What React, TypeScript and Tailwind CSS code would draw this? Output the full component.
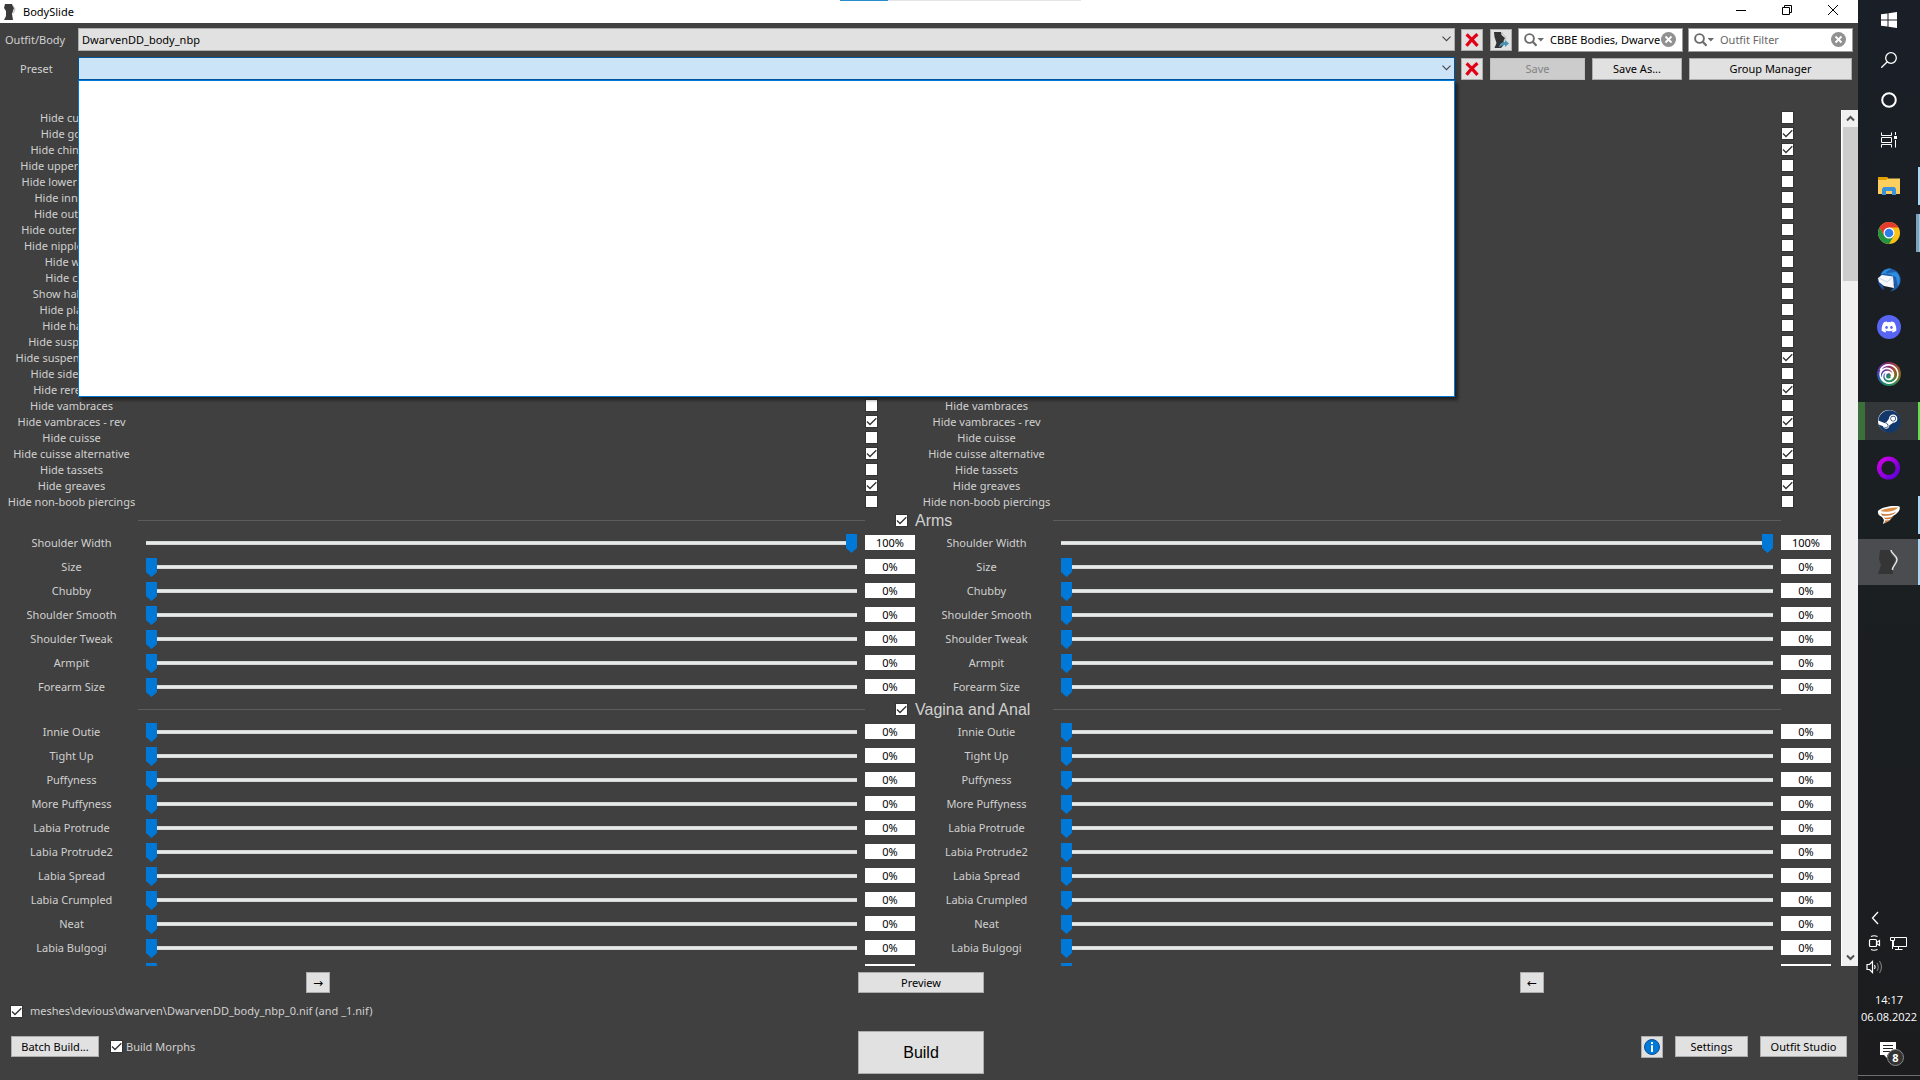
import React, { useState } from "react";
import { FaDiscord, FaSteam } from "react-icons/fa";
import { SiUbisoft } from "react-icons/si";

const toggles: [string, boolean][] = [
  ["Hide cuirass", false],
  ["Hide gorget", true],
  ["Hide chin guard", true],
  ["Hide upper plackart", false],
  ["Hide lower plackart", false],
  ["Hide inner bra", false],
  ["Hide outer bra", false],
  ["Hide outer bra - rev", false],
  ["Hide nipple covers", false],
  ["Hide waist", false],
  ["Hide cloth", false],
  ["Show half cups", false],
  ["Hide placket", false],
  ["Hide hands", false],
  ["Hide suspenders", false],
  ["Hide suspenders - rev", true],
  ["Hide side plates", false],
  ["Hide rerebrace", true],
  ["Hide vambraces", false],
  ["Hide vambraces - rev", true],
  ["Hide cuisse", false],
  ["Hide cuisse alternative", true],
  ["Hide tassets", false],
  ["Hide greaves", true],
  ["Hide non-boob piercings", false],
];

const groups: { title: string; sliders: [string, number][] }[] = [
  {
    title: "Arms",
    sliders: [
      ["Shoulder Width", 100],
      ["Size", 0],
      ["Chubby", 0],
      ["Shoulder Smooth", 0],
      ["Shoulder Tweak", 0],
      ["Armpit", 0],
      ["Forearm Size", 0],
    ],
  },
  {
    title: "Vagina and Anal",
    sliders: [
      ["Innie Outie", 0],
      ["Tight Up", 0],
      ["Puffyness", 0],
      ["More Puffyness", 0],
      ["Labia Protrude", 0],
      ["Labia Protrude2", 0],
      ["Labia Spread", 0],
      ["Labia Crumpled", 0],
      ["Neat", 0],
      ["Labia Bulgogi", 0],
      ["", 0],
    ],
  },
];

function Check({ id, label, initial }: { id: string; label?: string; initial: boolean }) {
  const [on, setOn] = useState(initial);
  return (
    <span className="relative block size-[13px] shrink-0">
      <input
        id={id}
        type="checkbox"
        aria-label={label}
        checked={on}
        onChange={() => setOn(!on)}
        className="block size-[13px] appearance-none border border-[#333333] bg-white"
      />
      {on && (
        <svg viewBox="0 0 13 13" className="pointer-events-none absolute inset-0 size-[13px]" fill="none" stroke="#333" strokeWidth="1.3">
          <path d="M2 6.5 5 9.5 11.3 3.2" />
        </svg>
      )}
    </span>
  );
}

function ToggleRow({ side, name, on }: { side: string; name: string; on: boolean }) {
  const id = `${side}-${name}`;
  return (
    <div className="flex h-4 items-start">
      <label htmlFor={id} className="w-[143px] shrink-0 text-center whitespace-nowrap">
        {name}
      </label>
      <div className="flex-1" />
      <div className="w-[50px] pt-px">
        <Check id={id} initial={on} />
      </div>
    </div>
  );
}

function SliderRow({ side, name, start }: { side: string; name: string; start: number }) {
  const [value, setValue] = useState(start);
  const id = `${side}-slider-${name}`;
  return (
    <div className="flex h-6 items-center">
      <label htmlFor={id} className="w-[143px] shrink-0 text-center whitespace-nowrap">
        {name}
      </label>
      <input
        id={id}
        type="range"
        min={0}
        max={100}
        value={value}
        onChange={(e) => setValue(Number(e.target.value))}
        className="mr-2 ml-[3px] h-5 min-w-0 flex-1 appearance-none bg-transparent [&::-webkit-slider-runnable-track]:h-1 [&::-webkit-slider-runnable-track]:border-y [&::-webkit-slider-runnable-track]:border-[#d6d6d6] [&::-webkit-slider-runnable-track]:bg-[#e7eaea] [&::-webkit-slider-thumb]:-mt-2 [&::-webkit-slider-thumb]:h-[19px] [&::-webkit-slider-thumb]:w-[11px] [&::-webkit-slider-thumb]:appearance-none [&::-webkit-slider-thumb]:bg-[#0078d7] [&::-webkit-slider-thumb]:[clip-path:polygon(0_0,100%_0,100%_74%,50%_100%,0_74%)]"
      />
      <input
        type="text"
        aria-label={`${name} value`}
        value={`${value}%`}
        onChange={(e) => setValue(parseInt(e.target.value) || 0)}
        className="mt-1 h-[15px] w-[50px] self-start bg-white text-center leading-[15px] text-black"
      />
    </div>
  );
}

function GroupHeader({ title }: { title: string }) {
  return (
    <div className="grid h-[21px] grid-cols-[915fr_916fr] items-center">
      <div className="flex items-center">
        <div className="ml-[138px] h-px flex-1 bg-[#5c5c5c]" />
        <div className="flex w-[50px] justify-end pr-[7px]">
          <Check id={`group-${title}`} initial={true} />
        </div>
      </div>
      <div className="flex items-center">
        <label htmlFor={`group-${title}`} className="w-[138px] font-['Liberation_Sans',sans-serif] text-base leading-5 whitespace-nowrap">
          {title}
        </label>
        <div className="h-px flex-1 bg-[#5c5c5c]" />
        <div className="w-[50px]" />
      </div>
    </div>
  );
}

const btn = "border border-[#adadad] bg-[#e1e1e1] text-black flex items-center justify-center whitespace-nowrap";

function RedX() {
  return (
    <svg viewBox="0 0 14 14" className="size-[14px]" stroke="#e10016" strokeWidth="3.2" fill="none">
      <path d="M1.5 1.5C5 4 9 9 12.5 12.8M12.5 1.2C9 4 4.500 9 1.500 12.800" />
    </svg>
  );
}

function Down() {
  return (
    <svg viewBox="0 0 9 6" className="h-[6px] w-[9px]" fill="none" stroke="#444" strokeWidth="1.1">
      <path d="M.5.7 4.500 4.700 8.500.7" />
    </svg>
  );
}

function SearchBox({ label, initial, placeholder }: { label: string; initial: string; placeholder?: string }) {
  const [text, setText] = useState(initial);
  return (
    <div className="flex h-6 w-[165px] items-center border border-[#9a9a9a] bg-white pr-[6px] pb-px pl-[5px]">
      <svg viewBox="0 0 20 14" className="h-[14px] w-5 shrink-0" fill="none" stroke="#6b6b6b">
        <circle cx="5.500" cy="5.500" r="4.400" strokeWidth="1.900" />
        <path d="M8.800 8.800 12.500 12.800" strokeWidth="2.200" />
        <path d="M13.500 5h6.500l-3.200 3.500z" fill="#6b6b6b" stroke="none" />
      </svg>
      <input
        type="text"
        aria-label={label}
        value={text}
        placeholder={placeholder}
        onChange={(e) => setText(e.target.value)}
        className="ml-[6px] min-w-0 flex-1 bg-transparent text-black placeholder:text-[#666]"
      />
      <button aria-label="Clear" onClick={() => setText("")} className="ml-px shrink-0">
        <svg viewBox="0 0 15 15" className="size-[15px]">
          <circle cx="7.500" cy="7.500" r="7.500" fill="#919191" />
          <path d="m4.500 4.500 6 6m0-6-6 6" stroke="#fff" strokeWidth="1.800" />
        </svg>
      </button>
    </div>
  );
}

function Toolbar() {
  return (
    <div className="flex flex-col gap-[5px] pt-[5px]">
      <div className="flex h-6 items-center">
        <label htmlFor="outfit" className="w-[78px] shrink-0 pl-[5px]">
          Outfit/Body
        </label>
        <div className="relative h-[23px] min-w-0 flex-1 self-start">
          <select id="outfit" className="block h-[23px] w-full appearance-none border border-[#adadad] bg-[#e1e1e1] pl-[3px] text-black">
            <option>DwarvenDD_body_nbp</option>
          </select>
          <span className="pointer-events-none absolute top-2 right-1">
            <Down />
          </span>
        </div>
        <button aria-label="Delete outfit" className={`${btn} ml-[6px] size-[22px]`}>
          <RedX />
        </button>
        <button aria-label="Edit in Outfit Studio" className={`${btn} mr-[6px] ml-[7px] size-[22px]`}>
          <svg viewBox="0 0 16 17" className="h-[17px] w-4">
            <path d="M1 0H8L8.500 3 12 6 10.500 9 11.500 12 8 16H1.500L3.500 11 1.500 5z" fill="#333" />
            <path d="M9 0c0 3 4 4 4 6s-1.500 2-2 3" fill="none" stroke="#bdbdbd" strokeWidth="1" />
            <path d="M6 15.500c.5-4 3-5.500 6-5.500V8l4 3.500-4 3.500v-2c-3 0-4 1-6 2.500z" fill="#4b93b5" />
          </svg>
        </button>
        <SearchBox label="Group filter" initial="CBBE Bodies, Dwarven" />
        <div className="mr-[5px] ml-[5px]">
          <SearchBox label="Outfit filter" initial="" placeholder="Outfit Filter" />
        </div>
      </div>
      <div className="flex h-6 items-center">
        <label htmlFor="preset" className="w-[78px] shrink-0 pl-5">
          Preset
        </label>
        <div className="relative h-[23px] min-w-0 flex-1 self-start">
          <select id="preset" className="block h-[23px] w-full appearance-none border border-[#005499] bg-[#cce4f7] text-black" />
          <span className="pointer-events-none absolute top-2 right-1">
            <Down />
          </span>
          <div role="listbox" aria-label="Presets" className="absolute inset-x-0 top-[23px] z-10 h-[317px] border border-[#0078d7] bg-white shadow-[3px_3px_3px_rgba(0,0,0,0.5)]" />
        </div>
        <button aria-label="Delete preset" className={`${btn} ml-[6px] size-[22px]`}>
          <RedX />
        </button>
        <button disabled className="ml-[7px] flex h-[22px] w-[95px] items-center justify-center border border-[#bfbfbf] bg-[#cccccc] text-[#838383]">
          Save
        </button>
        <button className={`${btn} ml-[7px] h-[22px] w-[90px]`}>Save As...</button>
        <button className={`${btn} mr-[6px] ml-[7px] h-[22px] w-[163px]`}>Group Manager</button>
      </div>
    </div>
  );
}

function ScrollBar() {
  return (
    <div className="flex w-[17px] shrink-0 flex-col items-center border-l border-white bg-[#f0f0f0]">
      <button aria-label="Scroll up" className="flex h-[17px] items-center justify-center">
        <svg viewBox="0 0 9 7" className="h-[7px] w-[9px]" fill="none" stroke="#505050" strokeWidth="2">
          <path d="M1 5.500 4.500 2 8 5.500" />
        </svg>
      </button>
      <div className="h-[154px] w-[15px] bg-[#cdcdcd]" />
      <div className="flex-1" />
      <button aria-label="Scroll down" className="flex h-[17px] items-center justify-center">
        <svg viewBox="0 0 9 7" className="h-[7px] w-[9px]" fill="none" stroke="#505050" strokeWidth="2">
          <path d="M1 1.500 4.500 5 8 1.500" />
        </svg>
      </button>
    </div>
  );
}

function Footer() {
  return (
    <div className="shrink-0">
      <div className="grid grid-cols-[636fr_570fr_652fr] justify-items-center pt-[6px]">
        <button aria-label="Copy to high weight" className={`${btn} h-[21px] w-6 font-['DejaVu_Sans',sans-serif] text-xs`}>→</button>
        <button className={`${btn} h-[21px] w-[126px]`}>Preview</button>
        <button aria-label="Copy to low weight" className={`${btn} h-[21px] w-6 font-['DejaVu_Sans',sans-serif] text-xs`}>←</button>
      </div>
      <div className="mt-[10px] flex h-[18px] items-start pl-[10px]">
        <div className="pt-[2px]">
          <Check id="output" initial={true} />
        </div>
        <label htmlFor="output" className="pl-[7px]">
          meshes\devious\dwarven\DwarvenDD_body_nbp_0.nif (and _1.nif)
        </label>
      </div>
      <div className="mt-[10px] grid h-[49px] grid-cols-[636fr_570fr_652fr] justify-items-center">
        <div className="mt-[5px] flex h-[21px] items-center justify-self-start pl-[11px]">
          <button className={`${btn} h-[21px] w-[88px]`}>Batch Build...</button>
          <div className="ml-[11px] flex items-center gap-[3px]">
            <Check id="morphs" initial={true} />
            <label htmlFor="morphs">Build Morphs</label>
          </div>
        </div>
        <button className={`${btn} h-[43px] w-[126px] font-['Liberation_Sans',sans-serif] text-base`}>Build</button>
        <div className="mt-[5px] mr-[11px] flex gap-3 justify-self-end">
          <button aria-label="About" className={`${btn} size-[22px]`}>
            <svg viewBox="0 0 16 16" className="size-4">
              <circle cx="8" cy="8" r="7.500" fill="#0078d7" stroke="#0a4f96" />
              <path d="M7 3h2v2H7zM7 6.300h2V13H7z" fill="#fff" />
            </svg>
          </button>
          <button className={`${btn} h-[21px] w-[73px]`}>Settings</button>
          <button className={`${btn} h-[21px] w-[87px]`}>Outfit Studio</button>
        </div>
      </div>
    </div>
  );
}

function TaskSlot({ label, className = "", bar, children }: { label: string; className?: string; bar?: string; children: React.ReactNode }) {
  return (
    <button aria-label={label} className={`relative flex h-[38px] w-full shrink-0 items-center justify-center ${className}`}>
      {children}
      {bar && <span className={`absolute inset-y-0 right-0 ${bar}`} />}
    </button>
  );
}

function TaskBar() {
  const slim = "flex h-10 w-full shrink-0 items-center justify-center";
  return (
    <nav className="flex w-[62px] shrink-0 flex-col bg-linear-to-b from-[#1a1e26] via-[#1a1f22] via-50% to-[#1c1c1e] text-white">
      <button aria-label="Start" className={slim}>
        <svg viewBox="0 0 16 16" className="size-4" fill="#fff">
          <path d="M0 2.300 6.500 1.400V7.500H0zM7.500 1.200 16 0v7.500H7.500zM0 8.500h6.500v6.100L0 13.700zM7.500 8.500H16V16l-8.500-1.200z" />
        </svg>
      </button>
      <button aria-label="Search" className={slim}>
        <svg viewBox="0 0 16 16" className="size-4" fill="none" stroke="#fff" strokeWidth="1.300">
          <circle cx="10" cy="6" r="5.300" />
          <path d="M6.300 9.700.3 15.700" />
        </svg>
      </button>
      <button aria-label="Cortana" className={slim}>
        <svg viewBox="0 0 16 16" className="size-4" fill="none" stroke="#fff" strokeWidth="2">
          <circle cx="8" cy="8" r="6.800" />
        </svg>
      </button>
      <button aria-label="Task view" className={slim}>
        <svg viewBox="0 0 16 16" className="size-4" fill="none" stroke="#fff">
          <path d="M.5.500V3.500H10.500V.500M.5 5.500H10.500V10.500H.5zM.5 15.500V12.500H10.500V15.500M14.500 0V3M14.500 8V15.500" />
          <path d="M13 4h3v3h-3z" fill="#fff" stroke="none" />
        </svg>
      </button>
      <div className="mt-[7px] flex flex-col gap-[9px]">
        <TaskSlot label="File Explorer" bar="w-[2px] bg-[#a6d8f8]">
          <svg viewBox="0 0 22 18" className="h-[18px] w-[22px]">
            <path d="M0 0h9l1 1.500H22V17H0z" fill="#fdcf5f" />
            <path d="M0 0h9l1 1.500L8 3H0z" fill="#e3a000" />
            <path d="M4 18v-6l1.500-2h11L18 12v6h-4v-4H8v4z" fill="#3a92db" />
          </svg>
        </TaskSlot>
        <TaskSlot label="Chrome" bar="w-1 border-r border-[#9cc9e4] bg-[#7ea4bb]">
          <svg viewBox="0 0 22 22" className="size-[22px]">
            <circle cx="11" cy="11" r="11" fill="#fbc116" />
            <path d="M1.500 5.500A11 11 0 0 1 20.500 5.500H11L6.200 13.800z" fill="#e33b2e" />
            <path d="M1.500 5.500A11 11 0 0 0 11 22L15.800 13.700 6.200 13.700z" fill="#229342" />
            <circle cx="11" cy="11" r="5.500" fill="#fff" />
            <circle cx="11" cy="11" r="4.300" fill="#2f7ded" />
          </svg>
        </TaskSlot>
        <TaskSlot label="Thunderbird">
          <svg viewBox="0 0 24 24" className="size-6">
            <path d="M8 1.500C14-1 22 2 23.500 10c1 7-4 13-11 13.500 3-1.500 5-4 5-7L3 8c1-3 3-5 5-6.500z" fill="#1f5fae" />
            <path d="M4 6C6 2 11-.5 15 1c-3 .5-5 2-6 4l10 4 2 9c3-5 2-11-2-14" fill="#2f8de0" />
            <path d="M.5 10C1 16 3 20 7 22l-1-5z" fill="#1c4c93" />
            <path d="M1 10 5 7l11 1.500 1 11.500-10-2-5-4z" fill="#f7f8fb" />
            <path d="m2 10 8 4 6-5" fill="none" stroke="#c9d3e2" />
          </svg>
        </TaskSlot>
        <TaskSlot label="Discord">
          <span className="flex size-6 items-center justify-center rounded-full bg-[#5865f2]">
            <FaDiscord className="size-4" />
          </span>
        </TaskSlot>
        <TaskSlot label="Ubisoft Connect">
          <span className="flex size-6 items-center justify-center rounded-full bg-[conic-gradient(#8f2f6d,#a0522d,#7a6a20,#2d8c55,#1f8a6a,#2f4fb0,#6a2fa0,#8f2f6d)]">
            <SiUbisoft className="size-5" />
          </span>
        </TaskSlot>
        <TaskSlot label="Steam" className="border-l-[7px] border-[#3c703b] bg-[#34373a] pr-[7px]" bar="w-[2px] bg-[#5fe04a]">
          <span className="flex size-[22px] items-center justify-center rounded-full bg-white">
            <FaSteam className="size-[23px] shrink-0 text-[#12386b]" />
          </span>
        </TaskSlot>
        <TaskSlot label="Ring">
          <svg viewBox="0 0 24 24" className="size-6">
            <defs>
              <linearGradient id="ring" x1="0" y1="0" x2="1" y2="1">
                <stop offset="0" stopColor="#d400e6" />
                <stop offset="1" stopColor="#5a00d6" />
              </linearGradient>
            </defs>
            <circle cx="11.500" cy="12" r="9.300" fill="none" stroke="url(#ring)" strokeWidth="4.400" />
          </svg>
        </TaskSlot>
        <TaskSlot label="Vortex" bar="w-[2px] bg-[#a6d8f8]">
          <svg viewBox="0 0 24 20" className="h-5 w-6">
            <path d="M1 6C3 3 14 0 22.500 1.500 24 5 20 9 16 11l-3 4-7 4 1-4-2-3C2 11 .5 9 1 6z" fill="#fff" />
            <path d="M3.500 6C8 3 16 2 21 2.500 19 6 9 8 3.500 6z" fill="#d98b45" />
            <path d="M4 8.500c6 1.500 11 .5 15-2-2 4-9 5-14 4zM7 12.500c4 .5 7 0 10-2-2 4-6 4-9 3.500zM8 15.500c2 .3 4 0 5.500-1-1 2-3.500 3-6 3.500z" fill="#c9773a" />
          </svg>
        </TaskSlot>
      </div>
      <button aria-label="BodySlide" className="relative mt-[5px] flex h-[46px] w-full shrink-0 items-center justify-center bg-[#4a4c4f]">
        <svg viewBox="0 0 24 24" className="size-6">
          <path d="M3 0H13L14 4 18 9 16.500 14 15 18 16 24H1L4 15 2 9z" fill="#353535" />
          <path d="M14 0C14 4 20 5 20 9.500S15 16 15.500 20" fill="none" stroke="#e8e8e8" strokeWidth="1.500" />
        </svg>
        <span className="absolute inset-y-0 right-0 w-[2px] bg-[#a6d8f8]" />
      </button>
      <div className="flex-1" />
      <div className="grid grid-cols-[24px_24px] justify-center gap-y-2 pr-[6px]">
        <button aria-label="Show hidden icons" className="col-span-2 flex h-4 pl-[9px]">
          <svg viewBox="0 0 8 14" className="h-[14px] w-2" fill="none" stroke="#fff" strokeWidth="1.300">
            <path d="M7 1 1.500 7 7 13" />
          </svg>
        </button>
        <button aria-label="Meet now" className="flex h-4 items-center justify-center">
          <svg viewBox="0 0 13 16" className="h-4 w-[13px]" fill="none" stroke="#fff" strokeWidth="1.200">
            <rect x="1.500" y="4.500" width="7" height="7" rx="1" />
            <path d="m8.500 7.500 3-2v5l-3-2M3 1.500Q6 0 9.500 1.500M3 14.500Q6 16 9.500 14.500" />
          </svg>
        </button>
        <button aria-label="Network" className="flex h-4 items-center justify-center">
          <svg viewBox="0 0 17 14" className="h-[14px] w-[17px]" fill="none" stroke="#fff">
            <path d="M5 1.500H16.500V10.500H3.500V5M8.500 10.500V13M5 13.500H12.500M.5 1.500h4v3h-4zM2.500 5V13" />
          </svg>
        </button>
        <button aria-label="Volume" className="flex h-4 items-center justify-center">
          <svg viewBox="0 0 17 14" className="h-[14px] w-[17px]" fill="none" stroke="#fff" strokeWidth="1.200">
            <path d="M1 4.500H3.500L6.500 1.500V12.500L3.500 9.500H1zM8.500 5q1.300 2 0 4" />
            <path d="M11 3q2.500 4 0 8M13.500 1q4 6 0 12" stroke="#777" />
          </svg>
        </button>
      </div>
      <div className="mt-4 flex flex-col items-center text-[11px] leading-[17px] font-['Open_Sans',sans-serif]">
        <span>14:17</span>
        <span>06.08.2022</span>
      </div>
      <button aria-label="Notifications" className="mt-4 flex h-[34px] items-start justify-center pl-1">
        <svg viewBox="0 0 26 26" className="size-[26px]">
          <path d="M2 1h16v13H9v3l-3-3H2z" fill="#fff" />
          <path d="M5 4.500h10M5 7.500h10M5 10.500h7" stroke="#222" />
          <circle cx="17.500" cy="16.500" r="8" fill="#333" stroke="#8a8a8a" />
          <text x="17.500" y="20.500" textAnchor="middle" fontSize="11" fontWeight="bold" fill="#fff" fontFamily="Open Sans">
            8
          </text>
        </svg>
      </button>
      <div className="mb-1 h-px w-full bg-[#6e6e6e]" />
    </nav>
  );
}

export default function App() {
  return (
    <div className="flex h-screen w-full overflow-hidden bg-[#404040] font-['Noto_Sans',sans-serif] text-[11px] leading-4 text-[#d0d0d0]">
      <main className="flex min-w-0 flex-1 flex-col">
        <header className="relative flex h-[23px] shrink-0 items-center bg-white pl-1 text-black">
          <svg viewBox="0 0 12 16" className="h-4 w-3">
            <path d="M1 0h7l2 4-1 3-1 3 1 6H0l2-4V7L0 4z" fill="#3a3a3a" />
            <path d="M8.500 1 11 5 9.500 9" fill="none" stroke="#bbb" />
          </svg>
          <h1 className="flex-1 pl-[7px]">BodySlide</h1>
          <div className="absolute top-0 left-[840px] flex h-px w-[241px] bg-[#e5e5e5]">
            <span className="w-12 bg-[#2a8dcb]" />
          </div>
          <div className="flex h-5 items-center self-start pr-[2px]">
            <button aria-label="Minimize" className="flex w-[46px] justify-center">
              <svg viewBox="0 0 10 10" className="size-[10px]" stroke="#000">
                <path d="M0 5.500H10" />
              </svg>
            </button>
            <button aria-label="Restore" className="flex w-[46px] justify-center">
              <svg viewBox="0 0 10 10" className="size-[10px]" stroke="#000" fill="none">
                <path d="M.5 2.500H7.500V9.500H.5zM2.500 2.500V.500H9.500V7.500H7.500" />
              </svg>
            </button>
            <button aria-label="Close" className="flex w-[46px] justify-center">
              <svg viewBox="0 0 10 10" className="size-[10px]" stroke="#000">
                <path d="M0 0 10 10M10 0 0 10" />
              </svg>
            </button>
          </div>
        </header>
        <Toolbar />
        <div className="mt-[29px] flex min-h-0 flex-1">
          <div className="min-w-0 flex-1 overflow-hidden pr-[10px]">
            <div className="grid grid-cols-[915fr_916fr]">
              {["low", "high"].map((side) => (
                <div key={side}>
                  {toggles.map(([name, on]) => (
                    <ToggleRow key={name} side={side} name={name} on={on} />
                  ))}
                </div>
              ))}
            </div>
            {groups.map((g) => (
              <section key={g.title}>
                <GroupHeader title={g.title} />
                <div className="grid grid-cols-[915fr_916fr]">
                  {["low", "high"].map((side) => (
                    <div key={side}>
                      {g.sliders.map(([name, v]) => (
                        <SliderRow key={name} side={side} name={name} start={v} />
                      ))}
                    </div>
                  ))}
                </div>
              </section>
            ))}
          </div>
          <ScrollBar />
        </div>
        <Footer />
      </main>
      <TaskBar />
    </div>
  );
}
